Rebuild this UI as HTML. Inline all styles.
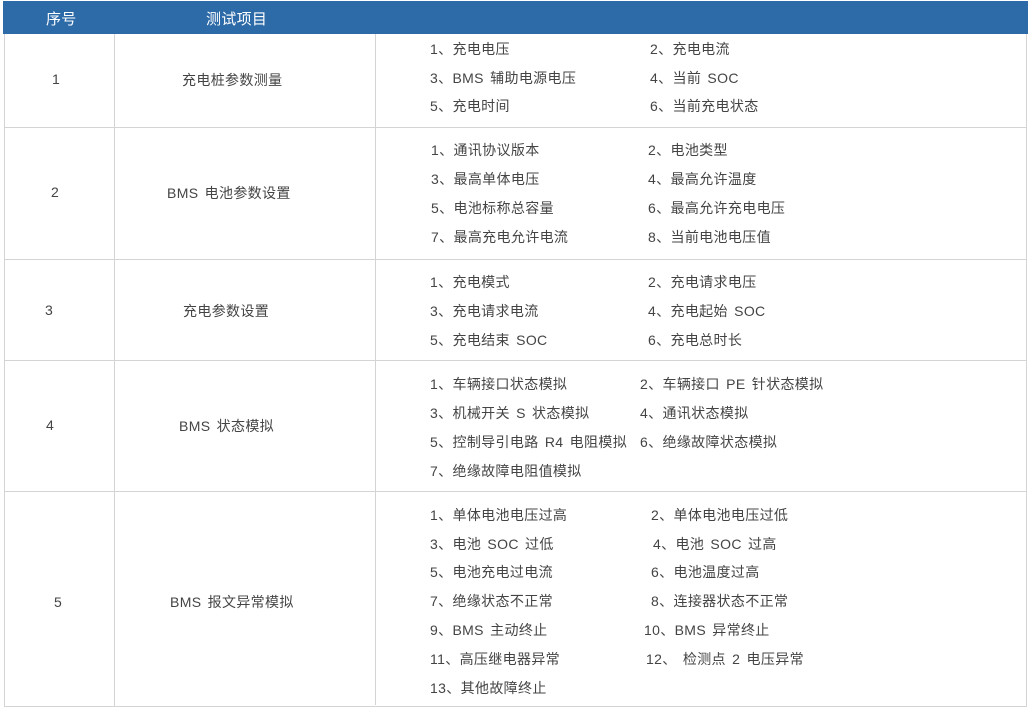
<!DOCTYPE html>
<html><head><meta charset="utf-8"><style>
body{margin:0;width:1031px;height:710px;background:#fff;position:relative;overflow:hidden;font-family:"Liberation Sans","Noto Sans CJK SC",sans-serif;color:#444;font-size:14px}
.h{position:absolute;left:3px;top:1px;width:1025px;height:33px;background:#2d6aa8}
.ht{position:absolute;top:8px;color:#fff;font-size:15px;letter-spacing:0.3px}
.l{position:absolute;background:#d4d4d4}
.t{position:absolute;white-space:nowrap;line-height:16px;letter-spacing:0.35px;word-spacing:2px}
</style></head><body>
<div class="h"></div>
<div class="ht" style="left:46px">序号</div>
<div class="ht" style="left:206px">测试项目</div>
<div class="l" style="left:4px;top:34px;width:1px;height:673px"></div>
<div class="l" style="left:1026px;top:34px;width:1px;height:673px"></div>
<div class="l" style="left:114px;top:34px;width:1px;height:673px"></div>
<div class="l" style="left:375px;top:34px;width:1px;height:671px"></div>
<div class="l" style="left:4px;top:127px;width:1023px;height:1px"></div>
<div class="l" style="left:4px;top:259px;width:1023px;height:1px"></div>
<div class="l" style="left:4px;top:360px;width:1023px;height:1px"></div>
<div class="l" style="left:4px;top:491px;width:1023px;height:1px"></div>
<div class="l" style="left:4px;top:706px;width:1023px;height:1px"></div>

<div class="t" style="left:52px;top:71px">1</div>
<div class="t" style="left:182px;top:72px">充电桩参数测量</div>
<div class="t" style="left:51px;top:184px">2</div>
<div class="t" style="left:167px;top:185px">BMS 电池参数设置</div>
<div class="t" style="left:45px;top:302px">3</div>
<div class="t" style="left:183px;top:303px">充电参数设置</div>
<div class="t" style="left:46px;top:417px">4</div>
<div class="t" style="left:179px;top:418px">BMS 状态模拟</div>
<div class="t" style="left:54px;top:594px">5</div>
<div class="t" style="left:170px;top:594px">BMS 报文异常模拟</div>

<div class="t" style="left:430px;top:41px">1、充电电压</div><div class="t" style="left:650px;top:41px">2、充电电流</div>
<div class="t" style="left:430px;top:70px">3、BMS 辅助电源电压</div><div class="t" style="left:650px;top:70px">4、当前 SOC</div>
<div class="t" style="left:430px;top:98px">5、充电时间</div><div class="t" style="left:650px;top:98px">6、当前充电状态</div>

<div class="t" style="left:431px;top:142px">1、通讯协议版本</div><div class="t" style="left:648px;top:142px">2、电池类型</div>
<div class="t" style="left:431px;top:171px">3、最高单体电压</div><div class="t" style="left:648px;top:171px">4、最高允许温度</div>
<div class="t" style="left:431px;top:200px">5、电池标称总容量</div><div class="t" style="left:648px;top:200px">6、最高允许充电电压</div>
<div class="t" style="left:431px;top:229px">7、最高充电允许电流</div><div class="t" style="left:648px;top:229px">8、当前电池电压值</div>

<div class="t" style="left:430px;top:274px">1、充电模式</div><div class="t" style="left:648px;top:274px">2、充电请求电压</div>
<div class="t" style="left:430px;top:303px">3、充电请求电流</div><div class="t" style="left:648px;top:303px">4、充电起始 SOC</div>
<div class="t" style="left:430px;top:332px">5、充电结束 SOC</div><div class="t" style="left:648px;top:332px">6、充电总时长</div>

<div class="t" style="left:430px;top:376px">1、车辆接口状态模拟</div><div class="t" style="left:640px;top:376px">2、车辆接口 PE 针状态模拟</div>
<div class="t" style="left:430px;top:405px">3、机械开关 S 状态模拟</div><div class="t" style="left:640px;top:405px">4、通讯状态模拟</div>
<div class="t" style="left:430px;top:434px">5、控制导引电路 R4 电阻模拟</div><div class="t" style="left:640px;top:434px">6、绝缘故障状态模拟</div>
<div class="t" style="left:430px;top:463px">7、绝缘故障电阻值模拟</div>

<div class="t" style="left:430px;top:507px">1、单体电池电压过高</div><div class="t" style="left:651px;top:507px">2、单体电池电压过低</div>
<div class="t" style="left:430px;top:536px">3、电池 SOC 过低</div><div class="t" style="left:653px;top:536px">4、电池 SOC 过高</div>
<div class="t" style="left:430px;top:564px">5、电池充电过电流</div><div class="t" style="left:651px;top:564px">6、电池温度过高</div>
<div class="t" style="left:430px;top:593px">7、绝缘状态不正常</div><div class="t" style="left:651px;top:593px">8、连接器状态不正常</div>
<div class="t" style="left:430px;top:622px">9、BMS 主动终止</div><div class="t" style="left:644px;top:622px">10、BMS 异常终止</div>
<div class="t" style="left:430px;top:651px">11、高压继电器异常</div><div class="t" style="left:646px;top:651px">12、 检测点 2 电压异常</div>
<div class="t" style="left:430px;top:680px">13、其他故障终止</div>
</body></html>
